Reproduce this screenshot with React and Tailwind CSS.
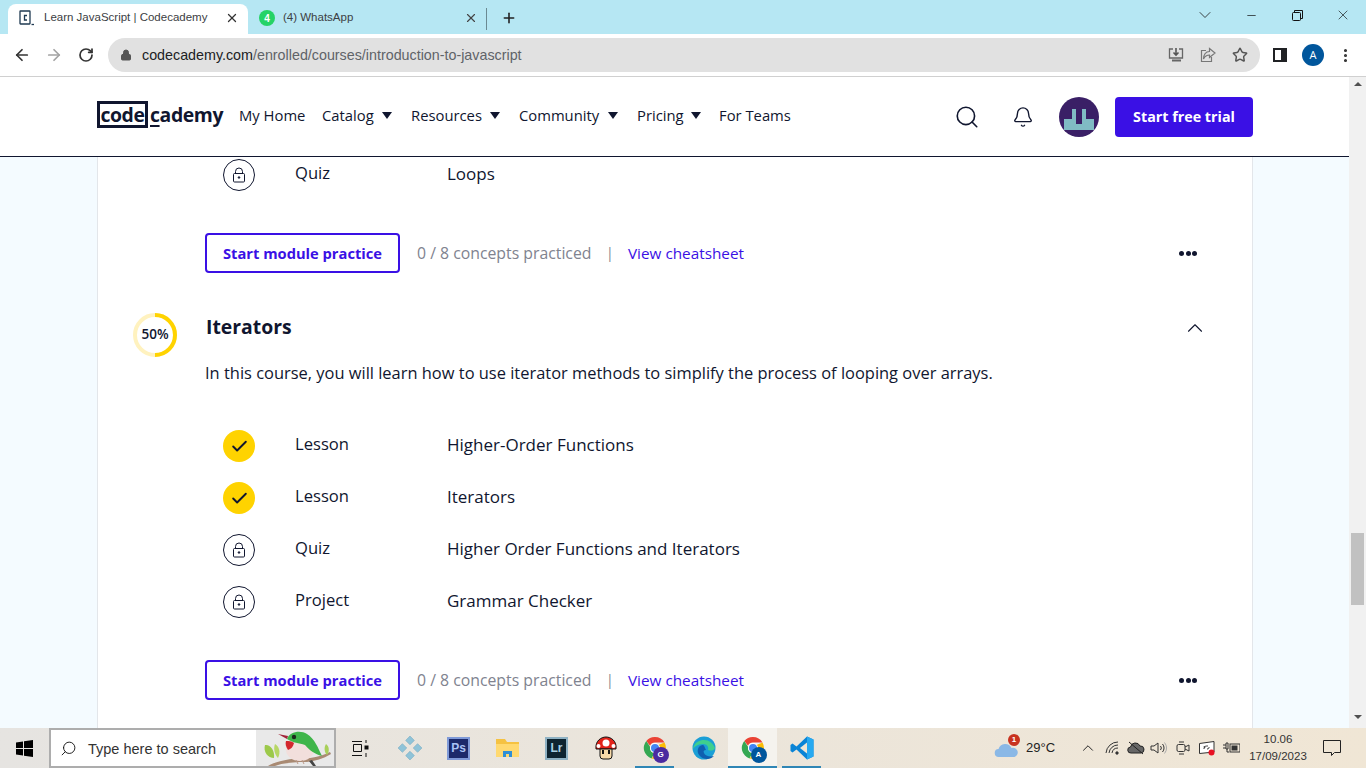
import { ChevronUp, ChevronDown, Search, Bell, Lock, Check, Star, ArrowLeft, ArrowRight, RotateCw, X, Plus, Minus, MoreVertical } from "lucide-react";

const uiFont = "font-['Open_Sans',sans-serif]";

function CaretDown() {
  return <span className="w-0 h-0 border-l-[5px] border-r-[5px] border-t-[7px] border-l-transparent border-r-transparent border-t-[#10162f]" />;
}

function NavItem({ label, width, caret }) {
  return (
    <div className={`flex items-center justify-between ${width}`}>
      <span>{label}</span>
      {caret && <CaretDown />}
    </div>
  );
}

function LockIcon() {
  return (
    <div className="w-8 h-8 rounded-full border border-[#10162f] flex items-center justify-center">
      <svg width="14" height="16" viewBox="0 0 14 16" fill="none" stroke="#10162f" strokeWidth="1">
        <rect x="1.5" y="6.5" width="11" height="8.5" rx="1" />
        <path d="M3.5 6.5V4.5a3.5 3.5 0 0 1 7 0v2" />
        <circle cx="7" cy="10.5" r="0.8" fill="#10162f" />
      </svg>
    </div>
  );
}

function DoneIcon() {
  return (
    <div className="w-8 h-8 rounded-full bg-[#ffd300] flex items-center justify-center">
      <Check size={19} strokeWidth={2.4} color="#10162f" />
    </div>
  );
}

function Row({ done, kind, title }) {
  return (
    <div className="flex items-center h-[52px] pl-[125px]">
      <div className="w-[72px] pt-[2px]">{done ? <DoneIcon /> : <LockIcon />}</div>
      <span className="w-[152px] -mt-[2px] text-[16.6px]">{kind}</span>
      <span className="text-[17px]">{title}</span>
    </div>
  );
}

function PracticeBar() {
  return (
    <div className="flex items-center h-10 pl-[107px] pr-[55px]">
      <div className="w-[195px] h-10 border-2 border-[#3a10e5] rounded-[4px] flex items-center justify-center text-[#3a10e5] font-bold text-[14.7px]">
        Start module practice
      </div>
      <span className="ml-[17px] w-[175px] pt-[1px] text-[#80838f] text-[15.8px] whitespace-nowrap">0 / 8 concepts practiced</span>
      <span className="ml-[14px] w-[22px] -mt-[1px] text-[#80838f] text-[14px]">|</span>
      <span className="text-[#3a10e5] text-[15.3px]">View cheatsheet</span>
      <div className="ml-auto flex gap-[1.5px]">
        <span className="w-[5px] h-[5px] rounded-full bg-[#10162f]" />
        <span className="w-[5px] h-[5px] rounded-full bg-[#10162f]" />
        <span className="w-[5px] h-[5px] rounded-full bg-[#10162f]" />
      </div>
    </div>
  );
}

function ChromeLogo({ badge, badgeColor, size = 24 }) {
  return (
    <div className="relative w-6 h-6">
      <svg width={size} height={size} viewBox="0 0 24 24">
        <path d="M12 1a11 11 0 0 1 9.5 5.5H12a5.5 5.5 0 0 0-5 3.2L3.3 4.9A11 11 0 0 1 12 1z" fill="#ea4335" />
        <path d="M3.3 4.9 7.2 11a5.5 5.5 0 0 0 4 6.4L8.5 22.4A11 11 0 0 1 3.3 4.9z" fill="#34a853" />
        <path d="M21.5 6.5A11 11 0 0 1 12 23l-3.500-.6 4-5a5.500 5.500 0 0 0 3-8.500z" fill="#fbbc04" />
        <circle cx="12" cy="12" r="5" fill="#fff" />
        <circle cx="12" cy="12" r="4" fill="#4285f4" />
      </svg>
      <span className={`absolute -right-[2px] -bottom-[3px] w-4 h-4 rounded-full ${badgeColor} text-white text-[8px] font-bold flex items-center justify-center`}>
        {badge}
      </span>
    </div>
  );
}

function TaskIcon({ children, active, underline }) {
  return (
    <div className={`relative w-[49px] h-10 flex items-center justify-center ${active ? "bg-[#f5f3ee]" : ""}`}>
      {children}
      {underline && <span className={`absolute bottom-0 h-[2px] bg-[#2f86b5] ${active ? "inset-x-0" : "inset-x-[5px]"}`} />}
    </div>
  );
}

function Bird() {
  return (
    <svg width="78" height="36" viewBox="0 0 78 36">
      <path d="M12 36c10-6 26-8 42-8 8-1 14-3 20-6l1 2c-8 5-16 7-24 8-14 0-24 1-32 4z" fill="#a98a73" />
      <path d="M9 15c5-1 10 5 9 13-6 0-11-6-9-13z" fill="#9cc94a" />
      <path d="M19 14c4 2 6 8 3 14-3-3-5-9-3-14z" fill="#b7d765" />
      <path d="M70 14c3 2 4 7 1 11-3-3-3-8-1-11z" fill="#a8d05a" />
      <ellipse cx="44" cy="20" rx="14" ry="11" fill="#f2dfdc" />
      <path d="M31 9c3-8 14-9 20-5 8 5 11 14 15 22-7-2-13-6-17-11-6-2-12-2-18-6z" fill="#3fb54a" />
      <path d="M30 11c3 0 5 0 8 2-1 4-3 6-6 7-2-3-3-6-2-9z" fill="#d3272e" />
      <circle cx="38" cy="7" r="2.200" fill="#1d2a1d" />
      <path d="M22 4l10 2-1 3z" fill="#a3243a" />
      <path d="M56 30l4 6h-3l-4-5z" fill="#444" />
      <path d="M40 30l2 4M46 30l2 4" stroke="#b98" />
    </svg>
  );
}

function TrayIcons() {
  return (
    <div className="flex items-center text-[#222]">
      <div className="w-[23px] flex justify-center">
        <svg width="16" height="14" viewBox="0 0 16 14" fill="none" stroke="#333"><path d="M1 12a12 12 0 0 1 12-11M4 12a9 9 0 0 1 9-8M7 12a6 6 0 0 1 6-5" /><circle cx="12" cy="12" r="1.200" fill="#333" /></svg>
      </div>
      <div className="w-[23px] flex justify-center">
        <svg width="18" height="14" viewBox="0 0 18 14"><path d="M4 12a3 3 0 0 1-.500-6 5 5 0 0 1 9.500-1 3.500 3.500 0 0 1 1 7z" fill="#666" stroke="#222" /><path d="M2 1l14 12" stroke="#222" /></svg>
      </div>
      <div className="w-[23px] flex justify-center">
        <svg width="17" height="14" viewBox="0 0 17 14" fill="none" stroke="#333"><path d="M1 5h3l4-3v10l-4-3H1z" /><path d="M10.500 5a3 3 0 0 1 0 4M12.500 3a6 6 0 0 1 0 8" /><path d="M14.500 1.500a9 9 0 0 1 0 11" stroke="#aaa" /></svg>
      </div>
      <div className="w-[25px] flex justify-center">
        <svg width="16" height="16" viewBox="0 0 16 16" fill="none" stroke="#333"><rect x="2" y="4.500" width="8" height="7" rx="1.500" /><path d="M10 7l4-2v6l-4-2M4 2h5M4 14h5" /></svg>
      </div>
      <div className="w-[24px] flex justify-center">
        <svg width="18" height="16" viewBox="0 0 18 16"><path d="M1.500 3.500 16 1.500v10.500l-14.500 1.500z" fill="#fff" stroke="#333" /><path d="M6 9c0-3 2-3 4-3M6 6l1 2M9 9c2 0 2-1 2-2" fill="none" stroke="#333" /><circle cx="13.500" cy="12.500" r="3" fill="#e81123" /></svg>
      </div>
      <div className="w-[24px] flex justify-center">
        <svg width="17" height="12" viewBox="0 0 17 12"><path d="M0 3h3M0 6h3M3 1h2v6H3zM4 7v3h2" fill="none" stroke="#333" /><rect x="7" y="2" width="10" height="8" fill="none" stroke="#333" /><rect x="8.500" y="3.500" width="6" height="5" fill="#333" /></svg>
      </div>
    </div>
  );
}

export default function App() {
  return (
    <div className={`w-[1366px] h-[768px] overflow-hidden flex flex-col text-[#10162f] ${uiFont}`}>
      {/* tab strip */}
      <div className="h-[34px] shrink-0 bg-[#b6e7f3] flex items-end pl-2 relative">
        <div className="w-[240px] h-[30px] bg-white rounded-t-[8px] flex items-center pl-[11px] pr-[9px] pb-[2px] text-[#3c4043] text-[11.5px] font-['Liberation_Sans',sans-serif]">
          <svg width="16" height="16" viewBox="0 0 16 16" fill="none" stroke="#1f3a52" strokeWidth="1.300">
            <rect x="1" y="1" width="10" height="13" rx="0.500" />
            <path d="M8 5.500H5.500v4.500H8" />
            <path d="M12.500 14.500H15" />
          </svg>
          <span className="ml-[9px] w-[181px]">Learn JavaScript | Codecademy</span>
          <X size={14} strokeWidth={2.2} color="#333" />
        </div>
        <div className="w-[238px] h-[30px] flex items-center pl-[11px] pr-[8px] pb-[2px] text-[#3c4043] text-[11.500px] font-['Liberation_Sans',sans-serif]">
          <span className="w-[16px] h-[16px] rounded-full bg-[#25d366] text-white text-[10px] font-bold flex items-center justify-center">4</span>
          <span className="ml-[8px] w-[181px]">(4) WhatsApp</span>
          <X size={14} strokeWidth={2} color="#444" />
        </div>
        <span className="w-px h-[22px] mb-[4px] bg-[#6b8a92]" />
        <div className="ml-[14px] h-[30px] pb-[2px] flex items-center">
          <Plus size={16} strokeWidth={2.4} color="#222" />
        </div>
        <div className="absolute top-0 right-0 h-[30px] flex items-center">
          <div className="w-[46px] flex justify-center"><ChevronDown size={20} strokeWidth={1} color="#222" /></div>
          <div className="w-[46px] flex justify-center"><Minus size={13} strokeWidth={1.300} color="#111" /></div>
          <div className="w-[46px] flex justify-center">
            <svg width="11" height="11" viewBox="0 0 11 11" fill="none" stroke="#111"><rect x="0.500" y="2.500" width="8" height="8" rx="1" /><path d="M2.500 2.500V.500h8v8H8.500" /></svg>
          </div>
          <div className="w-[46px] flex justify-center"><X size={16} strokeWidth={1} color="#111" /></div>
        </div>
      </div>
      {/* address bar */}
      <div className="h-[43px] shrink-0 bg-white border-b border-[#d0d0d0] flex items-center pl-[13px]">
        <ArrowLeft size={18} strokeWidth={2.300} color="#333" />
        <ArrowRight size={18} strokeWidth={2.300} color="#a3a3a3" className="ml-[14px]" />
        <RotateCw size={16} strokeWidth={2.600} color="#333" className="ml-[15px]" />
        <div className="ml-[14px] w-[1152px] h-[34px] rounded-full bg-[#e1e1e1] flex items-center pl-[12px] pr-[12px] text-[14.3px] font-['Liberation_Sans',sans-serif]">
          <Lock size={12} fill="#555" color="#555" />
          <span className="ml-[10px] pt-[1px] text-[#202124]">codecademy.com</span>
          <span className="pt-[1px] text-[#5f6368]">/enrolled/courses/introduction-to-javascript</span>
          <div className="ml-auto flex items-center gap-[16px]">
            <svg width="16" height="16" viewBox="0 0 16 16" fill="none" stroke="#666" strokeWidth="1.300">
              <path d="M5 2H1.500v9h13V2H11" />
              <path d="M8 1v7M5.500 5.500 8 8l2.500-2.500" strokeWidth="1.600" stroke="#555" />
              <path d="M4 13.500h9" strokeWidth="2" />
            </svg>
            <svg width="16" height="16" viewBox="0 0 16 16" fill="none" stroke="#777" strokeWidth="1.200">
              <path d="M6 3.500H1.500v11h10V10" />
              <path d="M9.500 1.500 15 6l-5.500 4.500V8C7 8 5 9 3.500 12c0-4 2-7.500 6-7.500z" />
            </svg>
            <Star size={16} color="#555" strokeWidth={2.200} />
          </div>
        </div>
        <div className="ml-[13px] w-[14px] h-[14px] border-2 border-[#202124] border-r-[6px] bg-white" />
        <span className="ml-[15px] w-[22px] h-[22px] rounded-full bg-[#00569c] text-white text-[11px] flex items-center justify-center">A</span>
        <MoreVertical size={17} strokeWidth={2.400} color="#333" className="ml-[13px]" />
      </div>

      {/* page */}
      <div className="flex-1 min-h-0 flex">
        <div className="flex-1 min-w-0 flex flex-col bg-[#f4fbff]">
          <header className="h-20 shrink-0 bg-white border-b border-[#10162f] flex items-center pl-[97px] pr-[96px] text-[14.8px]">
            <div className="flex items-center w-[142px] -mt-[4px] font-bold text-[19.4px] tracking-[-0.4px] leading-none">
              <span className="w-[51px] h-[27px] border-[3px] border-[#10162f] flex items-center justify-center">code</span>
              <span className="ml-[2px]">
                <span className="underline decoration-2 underline-offset-[3px]">c</span>ademy
              </span>
            </div>
            <div className="flex items-center -mt-[2px]">
              <NavItem label="My Home" width="w-[83px]" />
              <NavItem label="Catalog" width="w-[70px]" caret />
              <div className="w-[19px]" />
              <NavItem label="Resources" width="w-[89px]" caret />
              <div className="w-[19px]" />
              <NavItem label="Community" width="w-[99px]" caret />
              <div className="w-[19px]" />
              <NavItem label="Pricing" width="w-[64px]" caret />
              <div className="w-[18px]" />
              <span>For Teams</span>
            </div>
            <div className="ml-auto flex items-center">
              <Search size={26} strokeWidth={1.500} color="#10162f" />
              <Bell size={22} strokeWidth={1.500} color="#10162f" className="ml-[32px]" />
              <div className="ml-[25px] w-10 h-10 rounded-full bg-[#3a1f66] flex items-end justify-center overflow-hidden pb-[7px]">
                <svg width="30" height="21" viewBox="0 0 30 21"><path d="M0 10h8V0h4v15h6V0h4v10h8v11H0z" fill="#80bcc4" /></svg>
              </div>
              <div className="ml-4 w-[138px] h-10 bg-[#3a10e5] rounded-[4px] flex items-center justify-center text-white font-bold text-[14.300px]">
                Start free trial
              </div>
            </div>
          </header>

          <div className="flex-1 min-h-0 overflow-hidden">
            <div className="mx-[97px] w-[1156px] bg-white border-x border-[#e3e6ea] -mt-[9px] h-[600px] text-[16px]">
              <Row kind="Quiz" title="Loops" />
              <div className="h-[33px]" />
              <PracticeBar />
              <div className="flex items-center pl-[35px] pr-[44px] mt-[40px] h-[44px]">
                <div className="relative w-11 h-11 flex items-center justify-center">
                  <svg width="44" height="44" viewBox="0 0 44 44" className="absolute inset-0" fill="none" strokeWidth="4">
                    <circle cx="22" cy="22" r="20" stroke="#fff2bf" />
                    <path d="M22 2a20 20 0 0 1 0 40" stroke="#ffd300" />
                  </svg>
                  <span className="text-[13.500px] font-semibold -mt-[2px]">50%</span>
                </div>
                <span className="ml-[29px] text-[19.400px] font-bold -mt-[16px]">Iterators</span>
                <ChevronUp size={26} strokeWidth={1} color="#10162f" className="ml-auto -mt-[14px]" />
              </div>
              <div className="pl-[107px] mt-[4px] h-[24px] flex items-center whitespace-nowrap text-[16.440px]">
                In this course, you will learn how to use iterator methods to simplify the process of looping over arrays.
              </div>
              <div className="h-[34px]" />
              <Row done kind="Lesson" title="Higher-Order Functions" />
              <Row done kind="Lesson" title="Iterators" />
              <Row kind="Quiz" title="Higher Order Functions and Iterators" />
              <Row kind="Project" title="Grammar Checker" />
              <div className="h-[33px]" />
              <PracticeBar />
            </div>
          </div>
        </div>
        {/* scrollbar */}
        <div className="w-[17px] shrink-0 bg-[#f1f1f1] flex flex-col items-center relative">
          <span className="mt-[5px] w-0 h-0 border-l-[4px] border-r-[4px] border-b-[4px] border-l-transparent border-r-transparent border-b-[#505050]" />
          <span className="mt-[447px] w-[13px] h-[72px] bg-[#c1c1c1]" />
          <span className="mt-[110px] w-0 h-0 border-l-[4px] border-r-[4px] border-t-[4px] border-l-transparent border-r-transparent border-t-[#505050]" />
        </div>
      </div>

      {/* taskbar */}
      <div className="h-10 shrink-0 bg-gradient-to-r from-[#e6e4e1] to-[#f0e6d5] flex items-center font-['Liberation_Sans',sans-serif]">
        <div className="w-[49px] flex justify-center">
          <svg width="17" height="17" viewBox="0 0 17 17" fill="#000"><path d="M0 2.500 7 1.500v6.500H0zM8 1.300 17 0v8H8zM0 9h7v6.500L0 14.500zM8 9h9v8l-9-1.300z" /></svg>
        </div>
        <div className="w-[287px] h-10 border-2 border-[#adadad] bg-white flex items-center pl-[9px] text-[14.500px] text-[#333]">
          <Search size={17} strokeWidth={1.300} color="#111" className="-scale-x-100" />
          <span className="ml-[11px] pt-[3px]">Type here to search</span>
          <div className="ml-auto w-[78px] h-full bg-[#e9e9e9] overflow-hidden"><Bird /></div>
        </div>
        <TaskIcon>
          <svg width="17" height="17" viewBox="0 0 17 17" fill="none" stroke="#111"><path d="M0 1.500h10M0 15.500h10M1.500 4.500h8v7h-8zM14 0v3M14 13v4" /><rect x="13" y="6" width="3" height="3" fill="#111" /></svg>
        </TaskIcon>
        <TaskIcon>
          <svg width="26" height="26" viewBox="0 0 24 24" fill="#8fc3d8"><path d="M12 1l4 4-4 4-4-4zM12 15l4 4-4 4-4-4zM5 8l4 4-4 4-4-4zM19 8l4 4-4 4-4-4z" stroke="#6ea6bd" strokeWidth="0.500" /></svg>
        </TaskIcon>
        <TaskIcon>
          <span className="w-[23px] h-[23px] bg-[#1c2a6b] border-2 border-[#7f9ad8] text-[#a9c2f5] text-[12px] font-bold flex items-center justify-center">Ps</span>
        </TaskIcon>
        <TaskIcon>
          <svg width="23" height="20" viewBox="0 0 23 20"><path d="M0 1h9l2 3h12v15H0z" fill="#f5c242" /><path d="M0 6h23v13H0z" fill="#ffd970" /><path d="M7 19v-6h9v6h-3v-3h-3v3z" fill="#2f8fd6" /></svg>
        </TaskIcon>
        <TaskIcon>
          <span className="w-[23px] h-[23px] bg-[#0e2430] border-2 border-[#8fb2c4] text-[#a9d0e3] text-[12px] font-bold flex items-center justify-center">Lr</span>
        </TaskIcon>
        <TaskIcon>
          <svg width="24" height="24" viewBox="0 0 24 24"><path d="M2 13C1 5 7 1 12 1s11 4 10 12z" fill="#e2231a" stroke="#111" /><circle cx="12" cy="7" r="3.500" fill="#fff" /><circle cx="4.500" cy="10" r="2" fill="#fff" /><circle cx="19.500" cy="10" r="2" fill="#fff" /><path d="M6 13h12v7a3 3 0 0 1-3 3H9a3 3 0 0 1-3-3z" fill="#f6d9a8" stroke="#111" /><path d="M9 14v4M15 14v4" stroke="#111" strokeWidth="2" /></svg>
        </TaskIcon>
        <TaskIcon underline>
          <ChromeLogo badge="G" badgeColor="bg-[#4b2aa0]" />
        </TaskIcon>
        <TaskIcon>
          <svg width="24" height="24" viewBox="0 0 24 24">
            <circle cx="12" cy="12" r="11.500" fill="#1b9fd6" />
            <path d="M1 13C2 6 8 4 12 4c5 0 9 3 11 8-1 3-5 3-7 2 1-3-1-6-5-6-5 0-9 3-10 5z" fill="#3fcf8e" />
            <path d="M11 9c-4 0-6 4-5 8 1 3 5 6 9 6 3 0 5-1 7-3-4 1-9 0-10-3-1-2 0-3 2-3-1-2-2-5-3-5z" fill="#0f5fb0" />
          </svg>
        </TaskIcon>
        <TaskIcon active underline>
          <ChromeLogo badge="A" badgeColor="bg-[#00569c]" />
        </TaskIcon>
        <TaskIcon underline>
          <svg width="24" height="24" viewBox="0 0 24 24">
            <path d="M17 0.500 23.500 3.500v17L17 23.500 6.500 13.500 2.500 16.500 0.500 15V9l2-1.500 4 3z" fill="#0a84d6" />
            <path d="M17 6.500 10 12l7 5.500z" fill="#f0e6d5" />
            <path d="M17 0.500 23.500 3.500v17L17 23.500z" fill="#27a9f0" />
          </svg>
        </TaskIcon>
        <div className="ml-auto flex items-center text-[#222]">
          <div className="relative w-[26px] h-[20px] mr-[6px]">
            <svg width="26" height="18" viewBox="0 0 26 18" className="absolute bottom-0 left-0"><path d="M5 17a4 4 0 0 1-.500-8 7 7 0 0 1 13-1 4.500 4.500 0 0 1 3 9z" fill="#8ab8e6" /></svg>
            <span className="absolute -top-[4px] right-0 w-[12px] h-[12px] rounded-full bg-[#c8321f] text-white text-[8px] font-bold flex items-center justify-center">1</span>
          </div>
          <span className="text-[13px] w-[32px]">29°C</span>
          <ChevronUp size={18} strokeWidth={1.300} color="#222" className="ml-[21px]" />
          <div className="ml-[4px]"><TrayIcons /></div>
          <div className="w-[70px] text-center text-[11.500px] leading-[17px] text-[#333]">
            <div>10.06</div>
            <div>17/09/2023</div>
          </div>
          <div className="w-[10px]" />
          <svg width="18" height="16" viewBox="0 0 18 16" fill="none" stroke="#222"><path d="M.500.500h17v12h-6l-3 3v-3h-8z" /></svg>
          <div className="w-[25px]" />
        </div>
      </div>
    </div>
  );
}
